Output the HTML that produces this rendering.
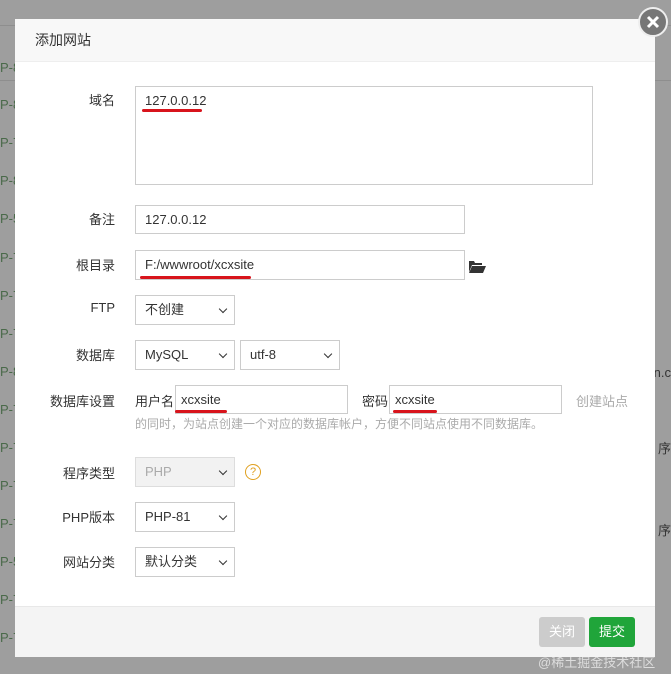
<!DOCTYPE html>
<html><head><meta charset="utf-8"><style>
body{margin:0;width:671px;height:674px;overflow:hidden;background:#9e9e9e;font-family:"Liberation Sans","Noto Sans CJK SC",sans-serif;font-size:13px;color:#333;position:relative}
.row{position:absolute;left:0;width:671px;height:1px;background:#8e8e8e}
.bgt{position:absolute;left:0;color:#4a6a4a;font-size:13px}
.modal{position:absolute;left:15px;top:19px;width:640px;height:638px;background:#fff;border-radius:2px}
.hd{height:42px;background:#f8f8f8;border-bottom:1px solid #eee;line-height:42px;padding-left:20px;font-size:14px;color:#333}
.ft{position:absolute;left:0;bottom:0;width:640px;height:50px;background:#f4f4f4;border-top:1px solid #e8e8e8}
.ab{position:absolute}
.lbl{position:absolute;width:100px;text-align:right;left:0}
.inp{position:absolute;border:1px solid #ccc;box-sizing:border-box;background:#fff;padding-left:9px;line-height:28px}
.sel:after{content:"";position:absolute;right:8px;top:10px;width:5px;height:5px;border-right:1.5px solid #333;border-bottom:1.5px solid #333;transform:rotate(45deg)}
.red{position:absolute;height:3px;background:#d8141c;border-radius:2px}
.btn{position:absolute;top:598px;height:30px;width:46px;border-radius:3px;color:#fff;text-align:center;line-height:30px}
</style></head><body>
<div class="row" style="top:25px"></div><div class="row" style="top:80px"></div>
<div class="bgt" style="top:60px">P-8</div><div class="bgt" style="top:97px">P-8</div><div class="bgt" style="top:135px">P-7</div><div class="bgt" style="top:173px">P-8</div><div class="bgt" style="top:211px">P-5</div><div class="bgt" style="top:250px">P-7</div><div class="bgt" style="top:288px">P-7</div><div class="bgt" style="top:326px">P-7</div><div class="bgt" style="top:364px">P-8</div><div class="bgt" style="top:402px">P-7</div><div class="bgt" style="top:440px">P-7</div><div class="bgt" style="top:478px">P-7</div><div class="bgt" style="top:516px">P-7</div><div class="bgt" style="top:554px">P-5</div><div class="bgt" style="top:592px">P-7</div><div class="bgt" style="top:630px">P-7</div>
<div style="position:absolute;right:0;top:365px;color:#333">n.c</div><div style="position:absolute;right:0;top:438px;color:#333">序</div><div style="position:absolute;right:0;top:520px;color:#333">序</div>
<div style="position:absolute;left:538px;top:652px;color:#ddd;font-size:13px">@稀土掘金技术社区</div>
<div class="modal">
<div class="hd">添加网站</div>
<div class="lbl" style="top:71px">域名</div>
<div class="inp" style="left:120px;top:67px;width:458px;height:99px;line-height:18px;padding-top:5px">127.0.0.12</div>
<div class="red" style="left:127px;top:90px;width:60px"></div>
<div class="lbl" style="top:190px">备注</div>
<div class="inp" style="left:120px;top:186px;width:330px;height:29px">127.0.0.12</div>
<div class="lbl" style="top:236px">根目录</div>
<div class="inp" style="left:120px;top:231px;width:330px;height:30px">F:/wwwroot/xcxsite</div>
<div class="red" style="left:125px;top:257px;width:111px"></div>
<svg class="ab" style="left:454px;top:241px" width="17" height="13" viewBox="0 0 17 13"><path d="M0 1h5l1 2h7v2H3L0 12z" fill="#333"/><path d="M3 6h14l-3 7H0z" fill="#333"/></svg>
<div class="lbl" style="top:281px">FTP</div>
<div class="inp sel" style="left:120px;top:276px;width:100px;height:30px">不创建</div>
<div class="lbl" style="top:326px">数据库</div>
<div class="inp sel" style="left:120px;top:321px;width:100px;height:30px">MySQL</div>
<div class="inp sel" style="left:225px;top:321px;width:100px;height:30px">utf-8</div>
<div class="lbl" style="top:372px">数据库设置</div>
<div class="ab" style="left:120px;top:372px">用户名</div>
<div class="inp" style="left:160px;top:366px;width:173px;height:29px;padding-left:5px">xcxsite</div>
<div class="red" style="left:160px;top:391px;width:52px"></div>
<div class="ab" style="left:347px;top:372px">密码</div>
<div class="inp" style="left:374px;top:366px;width:173px;height:29px;padding-left:5px">xcxsite</div>
<div class="red" style="left:378px;top:391px;width:44px"></div>
<div class="ab" style="left:561px;top:372px;color:#aaa">创建站点</div>
<div class="ab" style="left:120px;top:396px;color:#aaa;font-size:12px">的同时，为站点创建一个对应的数据库帐户，方便不同站点使用不同数据库。</div>
<div class="lbl" style="top:444px">程序类型</div>
<div class="inp sel" style="left:120px;top:438px;width:100px;height:30px;background:#f2f2f2;color:#aaa;border-color:#ddd">PHP</div>
<div class="ab" style="left:230px;top:445px;width:14px;height:14px;border:1.5px solid #e0a020;border-radius:50%;color:#e0a020;font-size:11px;line-height:14px;text-align:center">?</div>
<div class="lbl" style="top:488px">PHP版本</div>
<div class="inp sel" style="left:120px;top:483px;width:100px;height:30px">PHP-81</div>
<div class="lbl" style="top:533px">网站分类</div>
<div class="inp sel" style="left:120px;top:528px;width:100px;height:30px">默认分类</div>
<div class="ft"></div>
<div class="btn" style="left:524px;background:#ccc">关闭</div>
<div class="btn" style="left:574px;background:#20a53a">提交</div>
</div>
<div style="position:absolute;left:638px;top:7px;width:30px;height:30px;border-radius:50%;background:#777;border:2px solid #eee;box-sizing:border-box"><svg width="26" height="26" viewBox="0 0 26 26"><path d="M8 8l10 10M18 8L8 18" stroke="#fff" stroke-width="3"/></svg></div>
</body></html>
